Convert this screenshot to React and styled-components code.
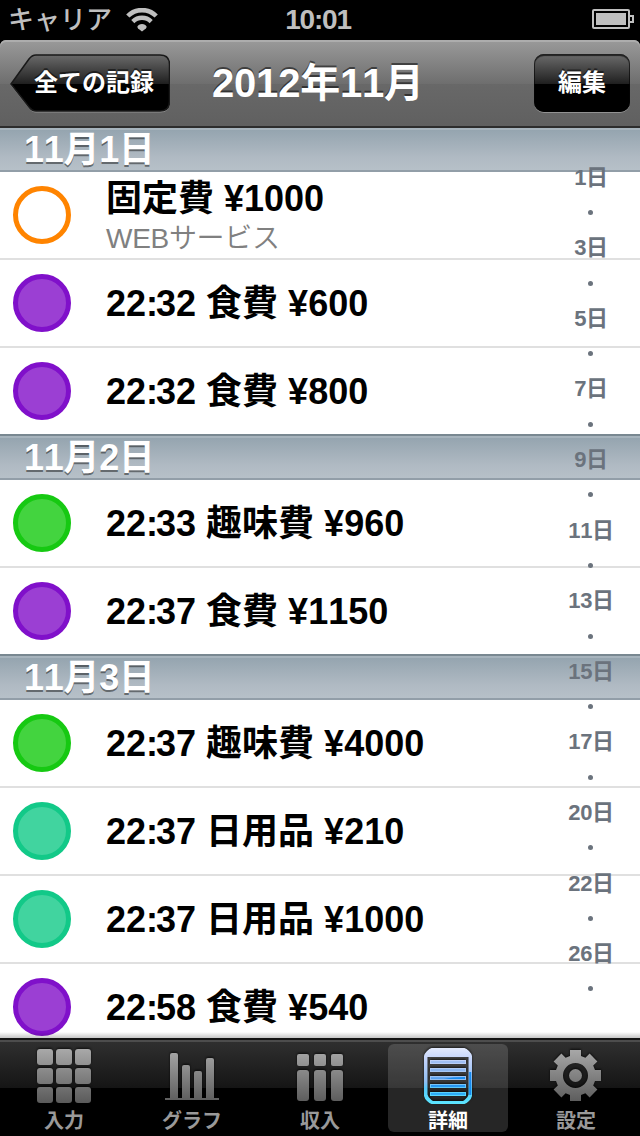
import React from "react";
import styled, { createGlobalStyle } from "styled-components";

const GlobalStyle = createGlobalStyle`
  * {
    box-sizing: border-box;
  }

  body {
    margin: 0;
    background: #000;
    font-family: "Liberation Sans", "Noto Sans CJK JP", sans-serif;
    font-kerning: none;
  }
`;

const Screen = styled.div`
  width: 640px;
  height: 1136px;
  display: flex;
  flex-direction: column;
  overflow: hidden;
  background: #000;
`;

const StatusBar = styled.header`
  flex: none;
  height: 40px;
  display: grid;
  grid-template-columns: 1fr auto 1fr;
  align-items: center;
  padding: 0 6px 0 8px;
  color: #bfbfbf;

  svg {
    display: block;
  }
`;

const Carrier = styled.div`
  display: flex;
  align-items: center;
  gap: 14px;
  font-size: 26px;
  font-weight: 500;
  line-height: 40px;
`;

const Clock = styled.time`
  padding-right: 6px;
  font-size: 28px;
  font-weight: bold;
  letter-spacing: -1.2px;
  line-height: 38px;
`;

const BatterySlot = styled.div`
  justify-self: end;
  padding-bottom: 2px;
`;

const NavBar = styled.nav`
  flex: none;
  height: 88px;
  display: flex;
  padding: 14px 10px 0;
  border-bottom: 2px solid #2d2d2d;
  border-radius: 6px 6px 0 0;
  background: linear-gradient(#9a9a9a, #6e6e6e 44px, #686868 44px, #606060);
  box-shadow: inset 0 2px 0 #adadad;
  color: #fff;
`;

const NavTitle = styled.h1`
  margin: 0 auto 0 42px;
  font-size: 40px;
  letter-spacing: -0.2px;
  line-height: 58px;
  text-shadow: 0 -2px 0 rgba(0, 0, 0, 0.5);
`;

const NavButton = styled.button`
  height: 58px;
  padding: 0;
  border: 0;
  color: #fff;
  font: bold 24px/56px "Liberation Sans", "Noto Sans CJK JP", sans-serif;
  text-shadow: 0 -2px 0 rgba(0, 0, 0, 0.5);
`;

const EditButton = styled(NavButton)`
  width: 96px;
  border-radius: 10px;
  background: linear-gradient(#6c6c6c, #1f1f1f 30px, #000 30px);
  box-shadow: inset 0 2px 1px #222, inset 0 0 0 1px rgba(0, 0, 0, 0.6),
    0 1px 0 #929292;
`;

const BackButton = styled(NavButton)`
  position: relative;
  width: 160px;
  padding-left: 8px;
  background: none;

  svg {
    position: absolute;
    left: 0;
    top: 0;
  }

  span {
    position: relative;
  }
`;

const Content = styled.main`
  position: relative;
  flex: none;
  height: 910px;
  overflow: hidden;
  background: #fff;

  &::after {
    content: "";
    position: absolute;
    left: 0;
    right: 0;
    bottom: 0;
    height: 6px;
    background: linear-gradient(rgba(0, 0, 0, 0), rgba(0, 0, 0, 0.22));
  }
`;

const SectionTitle = styled.h2`
  height: ${(p) => (p.$first ? 44 : 46)}px;
  margin: 0;
  padding-left: 24px;
  border-top: ${(p) => (p.$first ? 0 : 2)}px solid #798891;
  border-bottom: 2px solid #929ea8;
  background: linear-gradient(#93a3ae, #b0bac3 70%, #b6c0c8);
  box-shadow: inset 0 2px 0 #a7b4bd;
  color: #fff;
  font-size: 36px;
  letter-spacing: -0.3px;
  line-height: 44px;
  text-shadow: 0 2px 0 rgba(0, 0, 0, 0.45);
`;

const Row = styled.div`
  height: 88px;
  display: flex;
  align-items: center;
  gap: 35px;
  padding-left: 13px;
  border-bottom: 2px solid #e0e0e0;

  &:last-child {
    height: 86px;
    border-bottom: 0;
  }
`;

const Dot = styled.span`
  flex: none;
  width: 58px;
  height: 58px;
  border-radius: 50%;
  border: 5px solid ${(p) => p.$ring};
  background: ${(p) => p.$fill};
`;

const Title = styled.div`
  padding-top: 2px;
  font-size: 36px;
  font-weight: bold;
  line-height: 44px;
  color: #000;
`;

const Colon = styled.span`
  margin-right: -2px;
`;

const Note = styled.div`
  padding-top: 1px;
  font-size: 28px;
  font-weight: 350;
  letter-spacing: -0.3px;
  line-height: 34px;
  color: #808080;
`;

const DayIndex = styled.ol`
  position: absolute;
  top: 32px;
  left: 561px;
  width: 60px;
  height: 847px;
  margin: 0;
  padding: 0;
  display: flex;
  flex-direction: column;
  list-style: none;
  color: #6b737d;
  font-size: 22px;
  font-weight: bold;
  letter-spacing: -0.3px;
`;

const Day = styled.li`
  flex: 1;
  display: flex;
  align-items: center;
  justify-content: center;
  line-height: 30px;
`;

const Bullet = styled.i`
  width: 5px;
  height: 5px;
  margin: 0 1px 1px 0;
  border-radius: 50%;
  background: #6b737d;
`;

const TabBar = styled.footer`
  flex: none;
  height: 98px;
  display: grid;
  grid-template-columns: repeat(5, 128px);
  padding-top: 4px;
  border-top: 2px solid #151515;
  background: linear-gradient(
    #4d4d4d 2px,
    #2f2f2f 2px,
    #151515 48px,
    #000 48px
  );
`;

const Tab = styled.a`
  height: 88px;
  margin: 0 4px;
  padding-top: 2px;
  display: flex;
  flex-direction: column;
  align-items: center;
  border-radius: 6px;
  background: ${(p) => (p.$active ? "rgba(255, 255, 255, 0.15)" : "none")};
  color: ${(p) => (p.$active ? "#fff" : "#999")};
  font-size: 20px;
  font-weight: bold;
  line-height: 30px;

  svg {
    display: block;
    flex: none;
    filter: drop-shadow(0 -1px 1px rgba(0, 0, 0, 0.7));
  }
`;

const colors = {
  fixed: ["#ff8400", "#fff"],
  food: ["#8010ca", "#9b3fd3"],
  hobby: ["#16c912", "#43d43f"],
  daily: ["#12c988", "#41d49f"],
};

const sections = [
  {
    title: "11月1日",
    rows: [
      { kind: "fixed", title: "固定費 ¥1000", note: "WEBサービス" },
      { kind: "food", time: [22, 32], title: "食費 ¥600" },
      { kind: "food", time: [22, 32], title: "食費 ¥800" },
    ],
  },
  {
    title: "11月2日",
    rows: [
      { kind: "hobby", time: [22, 33], title: "趣味費 ¥960" },
      { kind: "food", time: [22, 37], title: "食費 ¥1150" },
    ],
  },
  {
    title: "11月3日",
    rows: [
      { kind: "hobby", time: [22, 37], title: "趣味費 ¥4000" },
      { kind: "daily", time: [22, 37], title: "日用品 ¥210" },
      { kind: "daily", time: [22, 37], title: "日用品 ¥1000" },
      { kind: "food", time: [22, 58], title: "食費 ¥540" },
    ],
  },
];

const days = [1, 3, 5, 7, 9, 11, 13, 15, 17, 20, 22, 26];

const WifiIcon = () => (
  <svg width="32" height="24" viewBox="0 0 32 24" fill="none">
    <path d="M1.800 8a20 20 0 0 1 28.400 0" stroke="#bfbfbf" strokeWidth="4.600" />
    <path d="M6.800 13.600a13 13 0 0 1 18.400 0" stroke="#bfbfbf" strokeWidth="4.400" />
    <path d="M11.500 18.500q1-2.500 4.500-2.500t4.500 2.500q.3 1-.6 2L16 23.500l-3.900-3q-.9-1-.6-2z" fill="#bfbfbf" />
  </svg>
);

const BatteryIcon = () => (
  <svg width="42" height="20" viewBox="0 0 42 20" fill="none">
    <rect x="1" y="1" width="36" height="18" rx="1" stroke="#bfbfbf" strokeWidth="2" />
    <rect x="4" y="4" width="30" height="12" fill="#bfbfbf" />
    <path d="M38 7h3v6h-3" stroke="#bfbfbf" strokeWidth="2" />
  </svg>
);

const BackShape = () => (
  <svg width="160" height="60" viewBox="0 0 160 60">
    <defs>
      <linearGradient id="back" x1="0" y1="0" x2="0" y2="58" gradientUnits="userSpaceOnUse">
        <stop offset="0" stopColor="#6c6c6c" />
        <stop offset=".517" stopColor="#1f1f1f" />
        <stop offset=".517" stopColor="#000" />
      </linearGradient>
    </defs>
    <path
      d="M26 1.500h124q10 0 10 10v37q0 10-10 10H26q-4 0-7-4L.500 31z"
      fill="#929292"
    />
    <path
      d="M26 1h124q9.500 0 9.500 9.500v37q0 9.500-9.500 9.500H26q-4 0-7-4L1 30 19 5q3-4 7-4z"
      fill="url(#back)"
      stroke="#191919"
      strokeWidth="1.500"
    />
  </svg>
);

const Grey = ({ id }) => (
  <defs>
    <linearGradient id={id} x1="0" y1="2" x2="0" y2="58" gradientUnits="userSpaceOnUse">
      <stop offset="0" stopColor="#aaa" />
      <stop offset="1" stopColor="#595959" />
    </linearGradient>
  </defs>
);

const GridIcon = () => (
  <svg width="60" height="60" fill="url(#g1)">
    <Grey id="g1" />
    {[3, 22, 41].map((y) =>
      [3, 22, 41].map((x) => (
        <rect key={`${x}-${y}`} x={x} y={y} width="16" height="16" rx="3" />
      ))
    )}
  </svg>
);

const ChartIcon = () => (
  <svg width="60" height="60" fill="url(#g2)">
    <Grey id="g2" />
    {[7, 19, 25, 12].map((y, i) => (
      <path key={y} d={`M${8 + i * 12} 52V${y + 2}q0-2 2-2h4q2 0 2 2V52z`} />
    ))}
    <rect x="3" y="52" width="54" height="2" />
  </svg>
);

const IncomeIcon = () => (
  <svg width="60" height="60" fill="url(#g3)">
    <Grey id="g3" />
    {[7, 24, 41].map((x) => (
      <g key={x}>
        <rect x={x} y="8" width="12" height="12" rx="2" />
        <rect x={x} y="24" width="12" height="31" rx="3" />
      </g>
    ))}
  </svg>
);

const DetailIcon = () => (
  <svg width="60" height="60">
    <defs>
      <linearGradient id="pale" x1="0" y1="2" x2="0" y2="58" gradientUnits="userSpaceOnUse">
        <stop offset="0" stopColor="#e2e9fc" />
        <stop offset=".2" stopColor="#c3d3fa" />
        <stop offset=".6" stopColor="#8fbef2" />
        <stop offset=".72" stopColor="#58c9fb" />
        <stop offset="1" stopColor="#5ce6ff" />
      </linearGradient>
      <linearGradient id="blue" x1="0" y1="12" x2="0" y2="52" gradientUnits="userSpaceOnUse">
        <stop offset="0" stopColor="#a9c3f5" />
        <stop offset=".45" stopColor="#7fb1ee" />
        <stop offset=".6" stopColor="#238cee" />
        <stop offset="1" stopColor="#32b7f8" />
      </linearGradient>
    </defs>
    <path
      fill="url(#pale)"
      fillRule="evenodd"
      d="M13.500 2h33q2 .5 4.500 3t3 5v40q-.5 2.500-3 5t-4.500 3h-33q-2-.5-4.500-3t-3-5V10q.5-2.500 3-5t4.500-3zM9.500 11v37.500q.5 2 2.500 4t3 2.500h30q1-.5 3-2.500t2.500-4V11z"
    />
    <path d="M52.200 26v23" stroke="#168bef" strokeWidth="2" />
    {[14, 22, 30, 38, 46].map((y) => (
      <rect key={y} x="12.500" y={y + 0.5} width="35" height="3" fill="url(#blue)" stroke="url(#pale)" />
    ))}
    <path d="M26 33q8-2 21-2v2z" fill="#168bef" />
  </svg>
);

// eight teeth, each one given by its two base and two tip corners
const gearPoints = Array.from({ length: 8 }, (_, i) => {
  const turn = (i * Math.PI) / 4;
  return [
    [-5.5, -19.5],
    [-5.5, -25.5],
    [5.5, -25.5],
    [5.5, -19.5],
  ]
    .map(([x, y]) => {
      const px = 29.5 + x * Math.cos(turn) - y * Math.sin(turn);
      const py = 29.5 + x * Math.sin(turn) + y * Math.cos(turn);
      return `${px.toFixed(1)} ${py.toFixed(1)}`;
    })
    .join("L");
}).join("L");

const GearIcon = () => (
  <svg width="60" height="60" fill="url(#g5)">
    <Grey id="g5" />
    <path
      fillRule="evenodd"
      d={`M${gearPoints}zM29.500 17a12.500 12.500 0 1 0 0 25 12.500 12.500 0 0 0 0-25z`}
    />
    <circle cx="29.500" cy="29.500" r="6.500" />
  </svg>
);

const tabs = [
  { label: "入力", icon: <GridIcon /> },
  { label: "グラフ", icon: <ChartIcon /> },
  { label: "収入", icon: <IncomeIcon /> },
  { label: "詳細", icon: <DetailIcon />, active: true },
  { label: "設定", icon: <GearIcon /> },
];

const App = () => {
  return (
    <Screen>
      <GlobalStyle />
      <StatusBar>
        <Carrier>
          キャリア
          <WifiIcon />
        </Carrier>
        <Clock>10:01</Clock>
        <BatterySlot>
          <BatteryIcon />
        </BatterySlot>
      </StatusBar>
      <NavBar>
        <BackButton>
          <BackShape />
          <span>全ての記録</span>
        </BackButton>
        <NavTitle>2012年11月</NavTitle>
        <EditButton>編集</EditButton>
      </NavBar>
      <Content>
        {sections.map((section, i) => (
          <section key={section.title}>
            <SectionTitle $first={i === 0}>{section.title}</SectionTitle>
            {section.rows.map((row, j) => (
              <Row key={j}>
                <Dot $ring={colors[row.kind][0]} $fill={colors[row.kind][1]} />
                <div>
                  <Title>
                    {row.time && (
                      <>
                        {row.time[0]}
                        <Colon>:</Colon>
                        {row.time[1]}{" "}
                      </>
                    )}
                    {row.title}
                  </Title>
                  {row.note && <Note>{row.note}</Note>}
                </div>
              </Row>
            ))}
          </section>
        ))}
        <DayIndex>
          {days.map((day) => (
            <React.Fragment key={day}>
              <Day>{day}日</Day>
              <Day>
                <Bullet />
              </Day>
            </React.Fragment>
          ))}
        </DayIndex>
      </Content>
      <TabBar>
        {tabs.map((tab) => (
          <Tab key={tab.label} $active={tab.active}>
            {tab.icon}
            {tab.label}
          </Tab>
        ))}
      </TabBar>
    </Screen>
  );
};

export default App;
